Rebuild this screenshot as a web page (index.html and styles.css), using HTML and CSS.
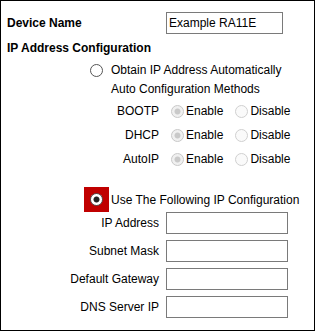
FILE: index.html
```html
<!DOCTYPE html>
<html lang="en">
<head>
    <meta charset="UTF-8">
    <title>IP Address Configuration</title>
    <link rel="stylesheet" href="styles.css">
</head>
<body>
    <div class="panel">
        <div class="row row-name">
            <span class="label label-bold">Device Name</span>
            <input type="text" class="text-field field-short" value="Example RA11E">
        </div>

        <div class="row row-heading">
            <span class="label-bold">IP Address Configuration</span>
        </div>

        <!-- Automatic -->
        <div class="row row-option">
            <span class="radio-slot"><input type="radio" name="mode" class="radio"></span>
            <span class="option-text">Obtain IP Address Automatically</span>
        </div>
        <div class="row row-sub-heading">
            <span class="option-text">Auto Configuration Methods</span>
        </div>

        <div class="row row-method">
            <span class="label">BOOTP</span>
            <div class="choice">
                <input type="radio" name="bootp" class="radio" checked disabled><span class="choice-text">Enable</span>
                <input type="radio" name="bootp" class="radio radio-second" disabled><span class="choice-text">Disable</span>
            </div>
        </div>
        <div class="row row-method">
            <span class="label">DHCP</span>
            <div class="choice">
                <input type="radio" name="dhcp" class="radio" checked disabled><span class="choice-text">Enable</span>
                <input type="radio" name="dhcp" class="radio radio-second" disabled><span class="choice-text">Disable</span>
            </div>
        </div>
        <div class="row row-method">
            <span class="label">AutoIP</span>
            <div class="choice">
                <input type="radio" name="autoip" class="radio" checked disabled><span class="choice-text">Enable</span>
                <input type="radio" name="autoip" class="radio radio-second" disabled><span class="choice-text">Disable</span>
            </div>
        </div>

        <!-- Static -->
        <div class="row row-option row-static">
            <span class="radio-slot radio-slot-active"><input type="radio" name="mode" class="radio" checked></span>
            <span class="option-text">Use The Following IP Configuration</span>
        </div>

        <div class="static-fields">
            <div class="row row-field">
                <span class="label">IP Address</span>
                <input type="text" class="text-field">
            </div>
            <div class="row row-field">
                <span class="label">Subnet Mask</span>
                <input type="text" class="text-field">
            </div>
            <div class="row row-field">
                <span class="label">Default Gateway</span>
                <input type="text" class="text-field">
            </div>
            <div class="row row-field">
                <span class="label">DNS Server IP</span>
                <input type="text" class="text-field">
            </div>
        </div>
    </div>
</body>
</html>
```

FILE: styles.css
```css
body {
    margin: 0;
    padding: 0;
    font-family: "Liberation Sans", Arial, sans-serif;
    font-size: 12px;
    color: #000;
    background: #fff;
}
/* Outer box */
.panel {
    width: 315px;
    height: 331px;
    box-sizing: border-box;
    border: 1px solid #000;
    padding: 11px 0 0 6px;
}
.row {
    display: flex;
    align-items: center;
}
.label {
    width: 152px;
    margin-right: 7px;
    text-align: right;
}
.label-bold {
    font-weight: bold;
}
.row-name {
    height: 22px;
}
.row-name .label {
    text-align: left;
}
.row-heading {
    height: 28px;
}
.row-option {
    height: 16px;
    padding-left: 77px;
}
.row-sub-heading {
    height: 21px;
    padding-left: 104px;
}
.row-method {
    height: 24px;
}
.row-static {
    height: 25px;
    margin-top: 16px;
}
.radio-slot {
    width: 25px;
    height: 25px;
    display: flex;
    align-items: center;
    justify-content: center;
    margin-right: 2px;
}
.radio-slot-active {
    background-color: #c00000;
}
.option-text {
    white-space: nowrap;
}
/* Inputs */
.text-field {
    width: 122px;
    height: 22px;
    box-sizing: border-box;
    border: 1px solid #7a7a7a;
    padding: 0 2px;
    margin: 0;
    font-family: "Liberation Sans", Arial, sans-serif;
    font-size: 12px;
    color: #000;
    background: #fff;
}
.field-short {
    width: 117px;
}
.static-fields {
    display: flex;
    flex-direction: column;
    gap: 6px;
}
.row-field {
    height: 22px;
}
/* Radios */
.radio {
    -webkit-appearance: none;
    appearance: none;
    width: 13px;
    height: 13px;
    margin: 0;
    box-sizing: border-box;
    border: 1px solid #555;
    border-radius: 50%;
    background: #fff;
}
.radio:checked {
    background: radial-gradient(circle, #222 0, #222 2.6px, #fff 3.4px);
}
.radio:disabled {
    border-color: #d0d0d0;
    background: #fafafa;
}
.radio:disabled:checked {
    border-color: #c8c8c8;
    background: radial-gradient(circle, #c9c9c9 0, #c9c9c9 2.6px, #f0f0f0 3.4px);
}
.choice {
    display: flex;
    align-items: center;
}
.choice .radio {
    margin-left: 5px;
}
.choice .radio-second {
    margin-left: 12px;
}
.choice-text {
    margin-left: 2px;
}
```
